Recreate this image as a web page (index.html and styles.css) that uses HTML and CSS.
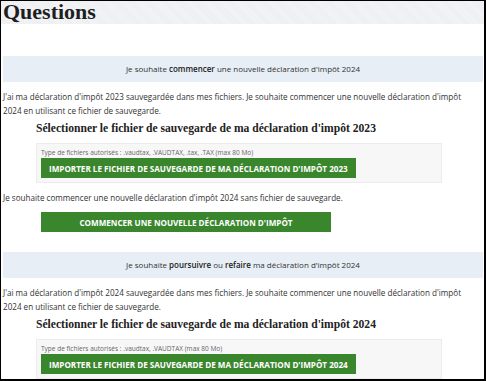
FILE: index.html
```html
<!DOCTYPE html>
<html>

<head>
  <title>Questions</title>
  <link rel="stylesheet" href="styles.css">
</head>

<body>
  <div class="frame">
    <div class="page-header">
      <h1>Questions</h1>
    </div>

    <div class="content">
      <!-- Nouvelle declaration -->
      <div class="question">
        Je souhaite <strong>commencer</strong> une nouvelle déclaration d'impôt 2024
      </div>
      <p class="info">J'ai ma déclaration d'impôt 2023 sauvegardée dans mes fichiers. Je souhaite commencer une nouvelle déclaration d'impôt 2024 en utilisant ce fichier de sauvegarde.</p>

      <div class="upload">
        <h2>Sélectionner le fichier de sauvegarde de ma déclaration d'impôt 2023</h2>
        <div class="upload-box">
          <p class="hint">Type de fichiers autorisés : .vaudtax, .VAUDTAX, .tax, .TAX (max 80 Mo)</p>
          <button class="btn">Importer le fichier de sauvegarde de ma déclaration d'impôt 2023</button>
        </div>
      </div>

      <p class="info info-alone">Je souhaite commencer une nouvelle déclaration d'impôt 2024 sans fichier de sauvegarde.</p>
      <div class="actions">
        <button class="btn btn-wide">Commencer une nouvelle déclaration d'impôt</button>
      </div>

      <!-- Declaration en cours -->
      <div class="question">
        Je souhaite <strong>poursuivre</strong> ou <strong>refaire</strong> ma déclaration d'impôt 2024
      </div>
      <p class="info">J'ai ma déclaration d'impôt 2024 sauvegardée dans mes fichiers. Je souhaite commencer une nouvelle déclaration d'impôt 2024 en utilisant ce fichier de sauvegarde.</p>

      <div class="upload">
        <h2>Sélectionner le fichier de sauvegarde de ma déclaration d'impôt 2024</h2>
        <div class="upload-box">
          <p class="hint">Type de fichiers autorisés : .vaudtax, .VAUDTAX (max 80 Mo)</p>
          <button class="btn">Importer le fichier de sauvegarde de ma déclaration d'impôt 2024</button>
        </div>
      </div>
    </div>
  </div>
</body>

</html>
```

FILE: styles.css
```css
html,
body {
  margin: 0;
  padding: 0;
}

body {
  font-family: "Open Sans", "Noto Sans", sans-serif;
  font-size: 8.1px;
  color: #333;
  background: #fff;
}

/* Black frame around the whole capture */
.frame {
  height: 381px;
  box-sizing: border-box;
  border-top: 1px solid #000;
  border-left: 1px solid #000;
  border-right: 2px solid #000;
  border-bottom: 2px solid #000;
  overflow: hidden;
}

/* Title band */
.page-header {
  height: 23px;
  background-color: #f3f4f6;
  background-image: repeating-linear-gradient(45deg, #eceef2 0 1px, transparent 1px 2px);
  padding-left: 2px;
}

h1 {
  margin: 0;
  font-family: "Liberation Serif", serif;
  font-weight: bold;
  font-size: 22px;
  line-height: 22px;
  color: #1e1e1e;
}

.content {
  padding: 32px 1px 0 2px;
}

/* Light blue question band */
.question {
  background: #e7eef5;
  height: 26px;
  line-height: 26px;
  font-size: 8px;
  text-align: center;
}

.question strong {
  font-weight: 600;
  color: #222;
}

p {
  margin: 0;
}

.info {
  line-height: 14px;
  margin-top: 8px;
  padding-right: 8px;
}

.info-alone {
  margin-top: 8px;
}

.upload {
  padding-left: 33px;
}

h2 {
  margin: 4px 0 8px;
  font-family: "Liberation Serif", serif;
  font-weight: bold;
  font-size: 11.6px;
  line-height: 13px;
  color: #222;
}

.upload-box {
  width: 400px;
  background: #f7f7f7;
  border: 1px solid #ececec;
  padding: 3px 0 4px 4px;
}

.hint {
  font-size: 6.5px;
  color: #666;
  line-height: 11px;
}

.btn {
  font-family: "Open Sans", sans-serif;
  font-weight: bold;
  font-size: 8.1px;
  text-transform: uppercase;
  color: #fff;
  background: #3a862d;
  border: none;
  height: 20px;
  padding: 0 8px;
}

.actions {
  padding: 7px 0 20px 38px;
}

.btn-wide {
  width: 290px;
}
```
